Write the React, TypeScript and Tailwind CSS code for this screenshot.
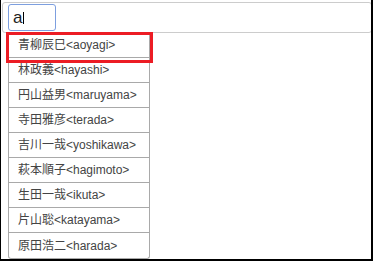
import React from "react";

const people = [
  "青柳辰巳<aoyagi>",
  "林政義<hayashi>",
  "円山益男<maruyama>",
  "寺田雅彦<terada>",
  "吉川一哉<yoshikawa>",
  "萩本順子<hagimoto>",
  "生田一哉<ikuta>",
  "片山聡<katayama>",
  "原田浩二<harada>",
];

const font = { fontFamily: '"Liberation Sans", "Noto Sans CJK JP", sans-serif' };

export default function App() {
  return (
    <div
      className="relative w-[373px] h-[261px] bg-white border-l border-r-2 border-b-2 border-black overflow-hidden"
      style={font}
    >
      {/* search box */}
      <div className="mt-[2px] ml-px w-[370px] h-[31px] border border-[#cccccc] rounded-[3px] flex items-end pl-[5px] pb-px">
        <div className="w-[48px] h-[27px] border border-[#7d9fdf] rounded-[3px] flex items-center pl-[4px]">
          <span className="text-[17px] leading-none text-[#222]">a</span>
          <span className="w-px h-[12px] bg-black ml-px" />
        </div>
      </div>

      {/* suggestions */}
      <ul className="ml-[7px] w-[142px] border border-t-0 border-[#a9a9a9] rounded-b-[3px]">
        {people.map((p, i) => (
          <li
            key={p}
            className={`h-[25px] flex items-center pl-[9px] text-[12px] text-[#444] ${
              i < people.length - 1 ? "border-b border-[#a9a9a9]" : ""
            }`}
          >
            {p}
          </li>
        ))}
      </ul>

      {/* highlight */}
      <div className="absolute left-[5px] top-[32px] w-[147px] h-[31px] border-[3px] border-[#ec1c24]" />
    </div>
  );
}
